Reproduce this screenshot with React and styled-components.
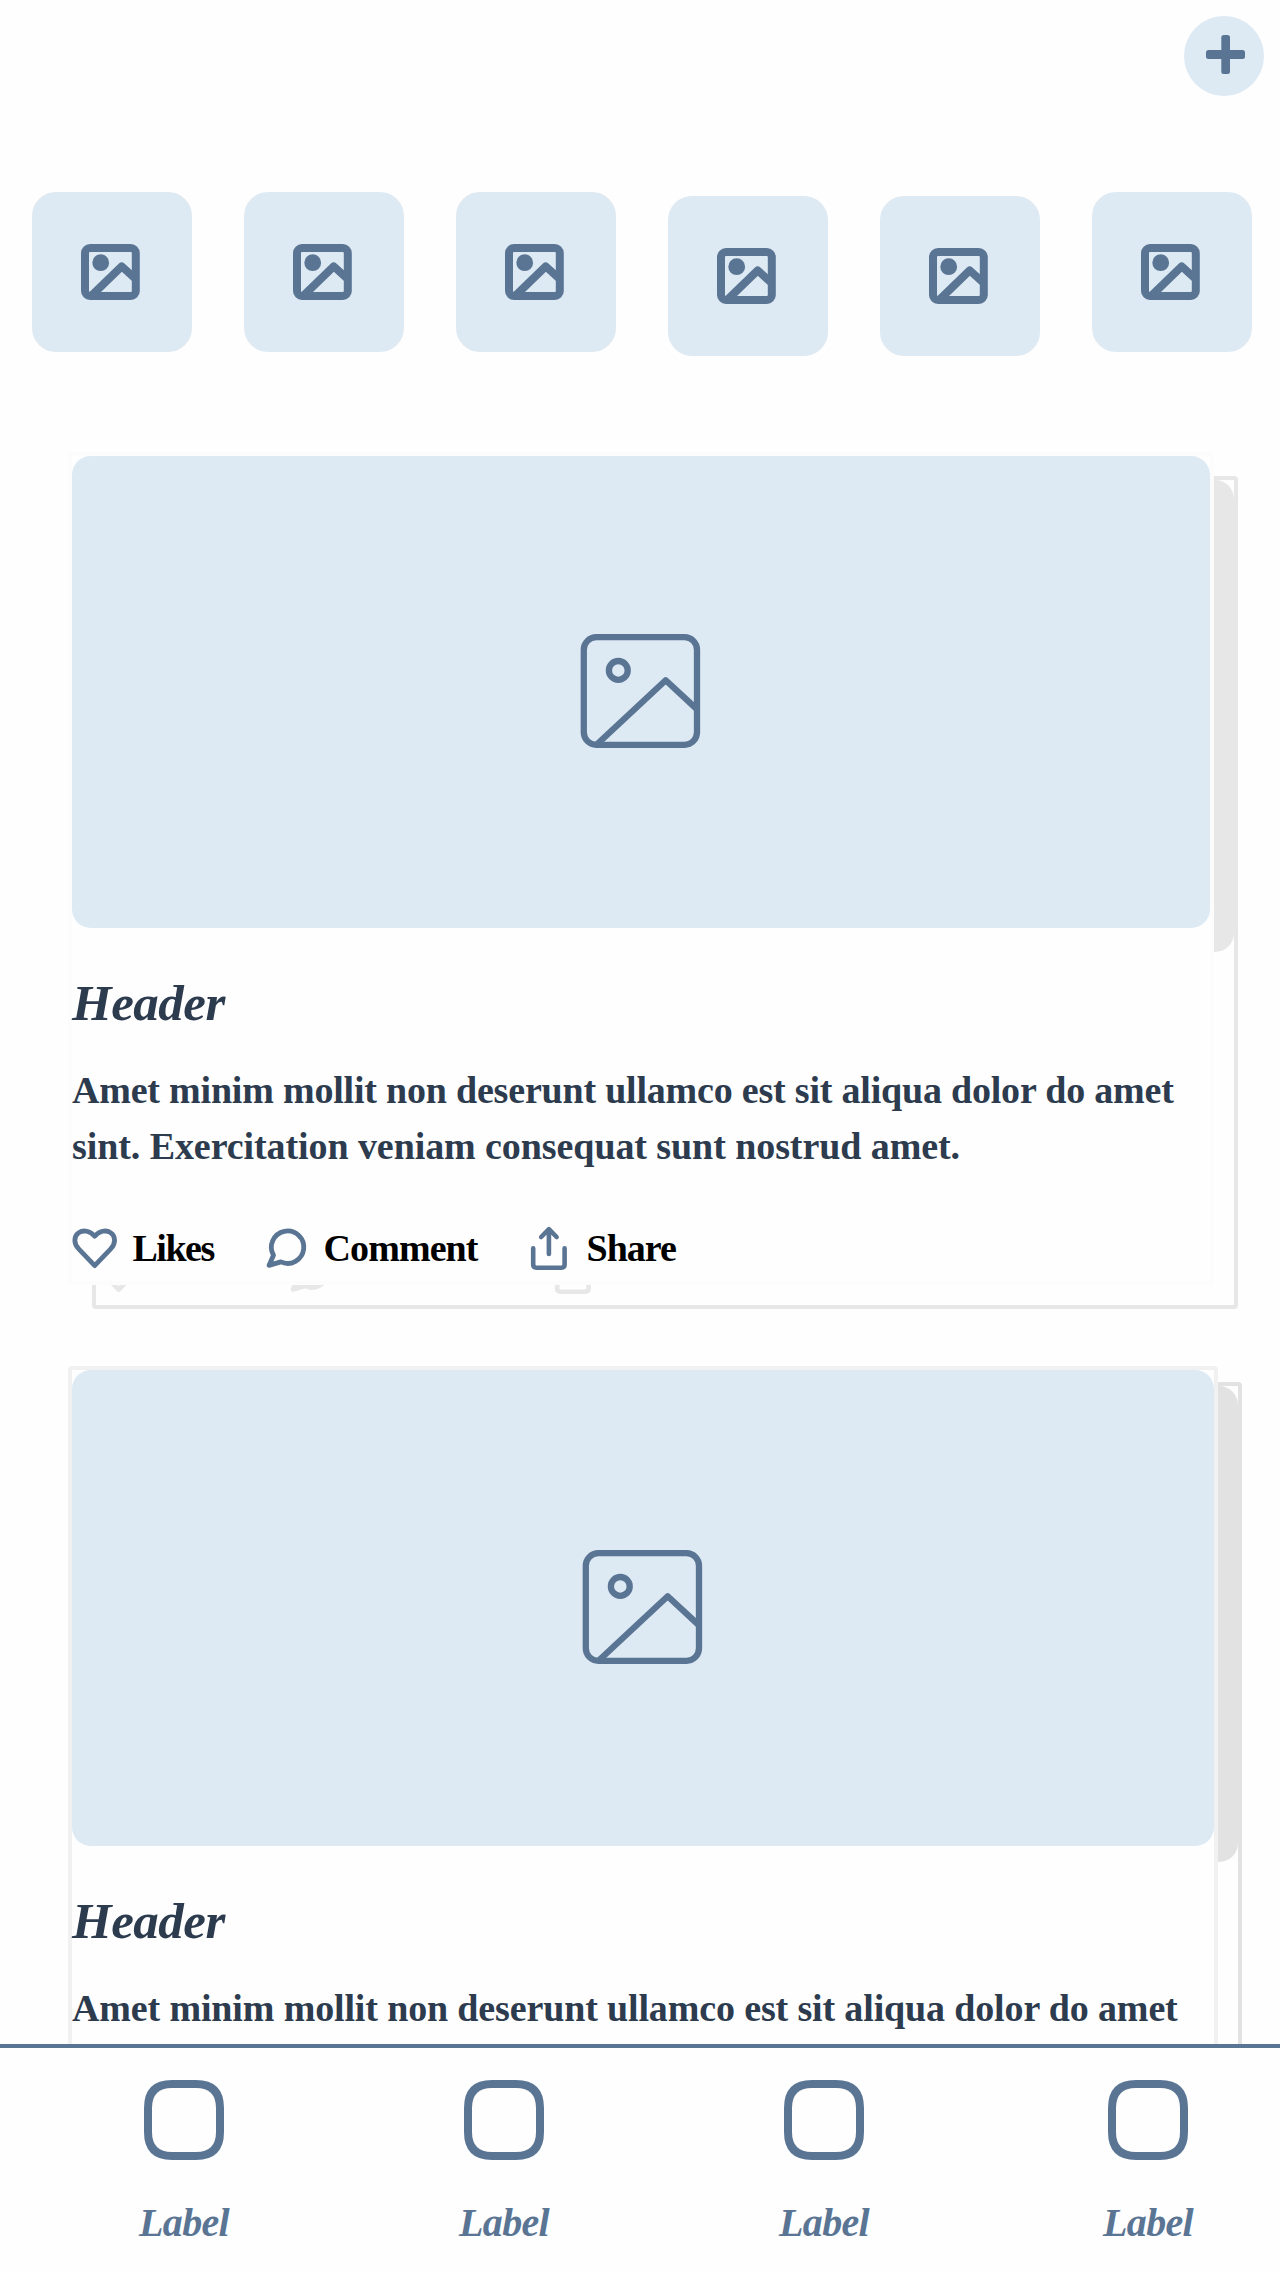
import React from "react";
import styled, { createGlobalStyle } from "styled-components";

const accent = "#5a7594";
const tint = "#dde9f3";
const ink = "#2d3b4e";

const GlobalStyle = createGlobalStyle`
  * { box-sizing: border-box; }
  body { margin: 0; background: #fefefe; }
`;

const Screen = styled.div`
  display: flex;
  flex-direction: column;
  width: 1280px;
  height: 2272px;
  overflow: hidden;
  background: #fefefe;
  font-family: "Liberation Serif", "Times New Roman", serif;
  font-weight: 700;
`;

const Content = styled.main`
  height: 2044px;
  overflow: hidden;
`;

const TopBar = styled.header`
  display: flex;
  justify-content: flex-end;
  padding: 16px 16px 0;
`;

const AddButton = styled.button`
  display: flex;
  width: 80px;
  height: 80px;
  padding: 0;
  border: 0;
  border-radius: 50%;
  background: ${tint};
`;

const Stories = styled.section`
  display: flex;
  gap: 52px;
  height: 260px;
  margin-top: 96px;
  padding-left: 32px;
`;

const Story = styled.div`
  flex: none;
  width: 160px;
  height: 160px;
  margin-top: ${(p) => (p.$lowered ? 4 : 0)}px;
  border-radius: 24px;
  background: ${tint};
`;

const Feed = styled.section`
  display: flex;
  flex-direction: column;
  gap: 81px;
  padding-left: 68px;
`;

const Post = styled.article`
  position: relative;
  flex: none;
  width: ${(p) => p.$width}px;
`;

const Frame = styled.div`
  position: relative;
  min-height: 833px;
  border: 4px solid ${(p) => p.$line};
  border-radius: 4px;
  background: #fefefe;
  padding-bottom: 9px;
`;

const Shadow = styled.div`
  position: absolute;
  inset: 0;
  display: flex;
  flex-direction: column;
  justify-content: space-between;
  padding-bottom: 9px;
  border: 4px solid ${(p) => p.$tone};
  border-radius: 4px;
  color: ${(p) => p.$tone};
  transform: translate(24px, ${(p) => p.$drop}px);
`;

const Picture = styled.div`
  display: flex;
  align-items: center;
  justify-content: center;
  height: ${(p) => p.$height}px;
  border-radius: 19px;
  background: ${(p) => p.$fill || tint};
`;

const Title = styled.h2`
  margin: 43px 0 0;
  color: ${ink};
  font-size: 51px;
  font-style: italic;
  letter-spacing: -0.5px;
  line-height: 64px;
`;

const Body = styled.p`
  margin: 27px 0 0;
  color: ${ink};
  font-size: 38px;
  line-height: 56px;
`;

const Line = styled.span`
  display: block;
  white-space: nowrap;
  letter-spacing: ${(p) => p.$tracking}px;
`;

const Actions = styled.div`
  display: grid;
  grid-template-columns: 193.5px 264.5px 180px;
  height: 48px;
  margin-top: ${(p) => p.$top || 0}px;
`;

const Action = styled.div`
  display: flex;
  height: 48px;
`;

const IconSlot = styled.div`
  flex: none;
  width: ${(p) => p.$width}px;
  height: 48px;
  color: ${(p) => (p.$muted ? "inherit" : accent)};
`;

const ActionLabel = styled.span`
  color: #000;
  font-size: 38px;
  line-height: 48px;
  letter-spacing: ${(p) => p.$tracking}px;
`;

const Nav = styled.nav`
  display: flex;
  gap: 240px;
  height: 228px;
  padding: 32px 0 0 144px;
  border-top: 4px solid ${accent};
  background: #fefefe;
`;

const NavItem = styled.div`
  display: flex;
  flex-direction: column;
  flex: none;
  align-items: center;
  width: 80px;

  &:last-child { margin-left: 4px; }
`;

const NavLabel = styled.span`
  margin-top: 39px;
  color: ${accent};
  font-size: 40px;
  font-style: italic;
  letter-spacing: -0.7px;
  line-height: 48px;
  white-space: nowrap;
`;

const PlusIcon = () => (
  <svg width="80" height="80" viewBox="0 0 80 80" fill={accent}>
    <rect x="22" y="34" width="39" height="9" rx="2.5" />
    <rect x="37.3" y="19" width="8.7" height="39" rx="2.5" />
  </svg>
);

const ThumbIcon = () => (
  <svg width="160" height="160" viewBox="0 0 160 160" fill="none" stroke={accent} strokeWidth="8" strokeLinejoin="round">
    <rect x="53" y="56" width="50.8" height="48" rx="5" />
    <path d="M60 103.2 89.7 74.4 103 86.4" />
    <circle cx="68.7" cy="70.7" r="8.4" fill={accent} stroke="none" />
  </svg>
);

const PictureIcon = () => (
  <svg width="128" height="128" viewBox="0 0 128 128" fill="none" stroke={accent} strokeWidth="6.3" strokeLinejoin="round">
    <rect x="6.8" y="9.2" width="113.2" height="107.6" rx="12.5" />
    <path d="M20.3 116 88.7 52.2 119 80.4" />
    <circle cx="41.3" cy="42.4" r="9.4" />
  </svg>
);

const ActionSvg = ({ children, weight = 4.8 }) => (
  <svg
    width="48"
    height="48"
    viewBox="0 0 48 48"
    fill="none"
    stroke="currentColor"
    strokeWidth={weight}
    strokeLinecap="round"
    strokeLinejoin="round"
  >
    {children}
  </svg>
);

const HeartIcon = () => (
  <ActionSvg>
    <path d="M22.7 41.6 6.9 25.2C1.4 19.4 1.7 12.4 6.5 8.9C11.5 5.4 18.3 6.9 22.7 12.2C27.1 6.9 33.9 5.4 38.9 8.9C43.7 12.4 44 19.4 38.5 25.2Z" />
  </ActionSvg>
);

const CommentIcon = () => (
  <ActionSvg>
    <path d="M3 41.4 7.5 31.2A16.2 16.2 0 1 1 14.8 37.9Z" />
  </ActionSvg>
);

const ShareIcon = () => (
  <ActionSvg weight={4.6}>
    <path d="M3.2 24.4V40.6Q3.2 43.7 6.3 43.7H31.5Q34.6 43.7 34.6 40.6V24.4M18.9 30V5.4M11.2 13 18.9 5.2 26.6 13" />
  </ActionSvg>
);

const SquareIcon = () => (
  <svg width="80" height="80" viewBox="0 0 80 80" fill="none" stroke={accent} strokeWidth="8">
    <path d="M28 4H52C68 4 76 12 76 28V52C76 68 68 76 52 76H28C12 76 4 68 4 52V28C4 12 12 4 28 4Z" />
  </svg>
);

const actions = [
  { label: "Likes", Icon: HeartIcon, slot: 60.5, tracking: -1.5 },
  { label: "Comment", Icon: CommentIcon, slot: 58, tracking: -0.9 },
  { label: "Share", Icon: ShareIcon, slot: 56.5, tracking: -1 },
];

const posts = [
  {
    width: 1146,
    picture: 472,
    line: "#fcfcfc",
    tone: "#e7e7e7",
    drop: 24,
    lines: [
      { text: "Amet minim mollit non deserunt ullamco est sit aliqua dolor do amet", tracking: -0.2 },
      { text: "sint. Exercitation veniam consequat sunt nostrud amet.", tracking: -0.08 },
    ],
    actions,
  },
  {
    width: 1150,
    picture: 476,
    line: "#f1f1f1",
    tone: "#e2e2e2",
    drop: 16,
    lines: [
      { text: "Amet minim mollit non deserunt ullamco est sit aliqua dolor do amet", tracking: -0.14 },
    ],
    actions: [],
  },
];

const FeedPost = ({ post }) => (
  <Post $width={post.width}>
    <Shadow $tone={post.tone} $drop={post.drop} aria-hidden="true">
      <Picture $height={post.picture} $fill={post.tone} />
      <Actions>
        {post.actions.map(({ label, Icon, slot }) => (
          <IconSlot key={label} $width={slot} $muted>
            <Icon />
          </IconSlot>
        ))}
      </Actions>
    </Shadow>
    <Frame $line={post.line}>
      <Picture $height={post.picture}>
        <PictureIcon />
      </Picture>
      <Title>Header</Title>
      <Body>
        {post.lines.map(({ text, tracking }) => (
          <Line key={text} $tracking={tracking}>{text}</Line>
        ))}
      </Body>
      <Actions $top={50}>
        {post.actions.map(({ label, Icon, slot, tracking }) => (
          <Action key={label}>
            <IconSlot $width={slot}>
              <Icon />
            </IconSlot>
            <ActionLabel $tracking={tracking}>{label}</ActionLabel>
          </Action>
        ))}
      </Actions>
    </Frame>
  </Post>
);

export default function App() {
  return (
    <Screen>
      <GlobalStyle />
      <Content>
        <TopBar>
          <AddButton aria-label="Add">
            <PlusIcon />
          </AddButton>
        </TopBar>
        <Stories>
          {[false, false, false, true, true, false].map((lowered, i) => (
            <Story key={i} $lowered={lowered}>
              <ThumbIcon />
            </Story>
          ))}
        </Stories>
        <Feed>
          {posts.map((post) => (
            <FeedPost key={post.width} post={post} />
          ))}
        </Feed>
      </Content>
      <Nav>
        {[0, 1, 2, 3].map((i) => (
          <NavItem key={i}>
            <SquareIcon />
            <NavLabel>Label</NavLabel>
          </NavItem>
        ))}
      </Nav>
    </Screen>
  );
}
